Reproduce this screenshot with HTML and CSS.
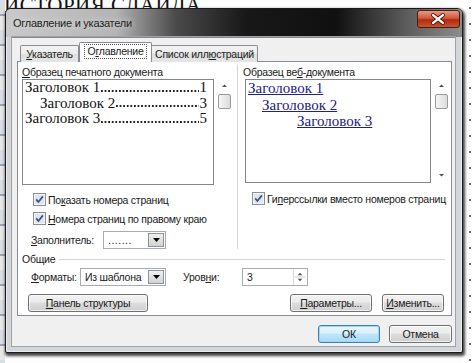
FILE: index.html
```html
<!DOCTYPE html>
<html lang="ru">
<head>
<meta charset="utf-8">
<link rel="stylesheet" href="styles.css">
</head>
<body>
<div class="desk">
  <div class="doc">
    <div class="doc-strip"></div>
    <div class="doc-title">ИСТОРИЯ СЛАЙДА</div>
    <div class="doc-ruler"></div>
  </div>
  <div class="window">
    <div class="titlebar">
      <span class="title">Оглавление и указатели</span>
      <span class="close">
        <svg width="43" height="18" viewBox="0 0 43 18">
          <path d="M16.5 5 L26.5 13 M26.5 5 L16.5 13" stroke="#5a1408" stroke-width="4.2" stroke-linecap="round"/>
          <path d="M16.5 5 L26.5 13 M26.5 5 L16.5 13" stroke="#ffffff" stroke-width="2.4" stroke-linecap="round"/>
        </svg>
      </span>
    </div>
    <div class="client">
      <div class="tabs">
        <div class="tab t1"><span><u>У</u>казатель</span></div>
        <div class="tab t2 active"><span class="focus">О<u>г</u>лавление</span></div>
        <div class="tab t3"><span>Список илл<u>ю</u>страций</span></div>
      </div>
      <div class="panel">
        <div class="cols">
          <div class="col col-left">
            <div class="label"><u>О</u>бразец печатного документа</div>
            <div class="preview">
              <div class="pbox print">
                <div class="tline"><span>Заголовок 1</span><span class="lead"></span><span>1</span></div>
                <div class="tline lvl2"><span>Заголовок 2</span><span class="lead"></span><span>3</span></div>
                <div class="tline"><span>Заголовок 3</span><span class="lead"></span><span>5</span></div>
              </div>
              <div class="scroll">
                <svg class="arr" width="15" height="10" viewBox="0 0 15 10"><path d="M5 6 L7.5 3.5 L10 6 Z" fill="#4d4d4d"/></svg>
                <div class="thumb"></div>
              </div>
            </div>
            <div class="chk-row">
              <span class="cb"><svg width="13" height="13" viewBox="0 0 13 13"><rect x="0.5" y="0.5" width="12" height="12" fill="#f4f4f4" stroke="#8e8f8f"/><rect x="2" y="2" width="9" height="9" fill="#dfe5ee"/><path d="M3.2 6.4 L5.4 9 L9.9 3.4" fill="none" stroke="#3b4f86" stroke-width="1.7"/></svg></span>
              <span>По<u>к</u>азать номера страниц</span>
            </div>
            <div class="chk-row">
              <span class="cb"><svg width="13" height="13" viewBox="0 0 13 13"><rect x="0.5" y="0.5" width="12" height="12" fill="#f4f4f4" stroke="#8e8f8f"/><rect x="2" y="2" width="9" height="9" fill="#dfe5ee"/><path d="M3.2 6.4 L5.4 9 L9.9 3.4" fill="none" stroke="#3b4f86" stroke-width="1.7"/></svg></span>
              <span><u>Н</u>омера страниц по правому краю</span>
            </div>
            <div class="field-row fill-row">
              <span class="flabel"><u>З</u>аполнитель:</span>
              <div class="combo combo-fill">
                <span class="cval">.......</span>
                <span class="cbtn"><svg width="7" height="4" viewBox="0 0 7 4"><path d="M0 0 H7 L3.5 4 Z" fill="#000"/></svg></span>
              </div>
            </div>
          </div>
          <div class="col col-right">
            <div class="label">Образец ве<u>б</u>-документа</div>
            <div class="preview">
              <div class="pbox web">
                <div class="wline"><a>Заголовок 1</a></div>
                <div class="wline w2"><a>Заголовок 2</a></div>
                <div class="wline w3"><a>Заголовок 3</a></div>
              </div>
              <div class="scroll">
                <svg class="arr" width="15" height="10" viewBox="0 0 15 10"><path d="M5 6 L7.5 3.5 L10 6 Z" fill="#4d4d4d"/></svg>
                <div class="thumb"></div>
                <svg class="arr down" width="15" height="10" viewBox="0 0 15 10"><path d="M5 4 L7.5 6.5 L10 4 Z" fill="#4d4d4d"/></svg>
              </div>
            </div>
            <div class="chk-row chk-right">
              <span class="cb"><svg width="13" height="13" viewBox="0 0 13 13"><rect x="0.5" y="0.5" width="12" height="12" fill="#f4f4f4" stroke="#8e8f8f"/><rect x="2" y="2" width="9" height="9" fill="#dfe5ee"/><path d="M3.2 6.4 L5.4 9 L9.9 3.4" fill="none" stroke="#3b4f86" stroke-width="1.7"/></svg></span>
              <span>Ги<u>п</u>ерссылки вместо номеров страниц</span>
            </div>
          </div>
        </div>
        <div class="group">
          <span>Общие</span><span class="gline"></span>
        </div>
        <div class="field-row fmt-row">
          <span class="flabel fmt-label"><u>Ф</u>орматы:</span>
          <div class="combo combo-fmt">
            <span class="cval">Из шаблона</span>
            <span class="cbtn"><svg width="7" height="4" viewBox="0 0 7 4"><path d="M0 0 H7 L3.5 4 Z" fill="#000"/></svg></span>
          </div>
          <span class="flabel lvl-label">Уров<u>н</u>и:</span>
          <div class="spin">
            <span class="cval">3</span>
            <span class="sbtn">
              <svg width="13" height="16" viewBox="0 0 13 16"><path d="M4 6 L6.5 3.5 L9 6 Z" fill="#555"/><path d="M4 10 L6.5 12.5 L9 10 Z" fill="#555"/><path d="M1 8 H12" stroke="#c9c9c9"/></svg>
            </span>
          </div>
        </div>
        <div class="btn-row">
          <button class="btn b-struct"><u>П</u>анель структуры</button>
          <span class="spacer"></span>
          <button class="btn b-params"><u>П</u>араметры...</button>
          <button class="btn b-edit"><u>И</u>зменить...</button>
        </div>
      </div>
      <div class="dlg-buttons">
        <button class="btn b-ok">ОК</button>
        <button class="btn b-cancel">Отмена</button>
      </div>
    </div>
  </div>
</div>
</body>
</html>
```

FILE: styles.css
```css
* { box-sizing: border-box; }
html, body { margin: 0; padding: 0; }
body {
  width: 474px;
  height: 363px;
  overflow: hidden;
  background: #ffffff;
  font-family: "Liberation Sans", Arial, sans-serif;
  font-size: 10.5px;
  letter-spacing: -0.25px;
  color: #1a1a1a;
}
.desk {
  position: relative;
  display: flow-root;
  width: 474px;
  height: 363px;
  background: #fdfdfd;
}
.doc { position: relative; height: 363px; display: flow-root; overflow: hidden; }
.doc-strip {
  position: absolute;
  left: 0; top: 0;
  width: 5px; height: 363px;
  background: repeating-linear-gradient(180deg, #d9dde4 0 14px, #9aa4b4 14px 16px, #e8e8e8 16px 30px);
}
.doc-title {
  padding-left: 4px;
  margin-top: -7px;
  font-family: "Liberation Serif", serif;
  font-size: 21px;
  letter-spacing: 0.5px;
  color: #111;
}
.doc-ruler {
  position: absolute;
  right: 0; top: 0;
  width: 11px; height: 363px;
  background: radial-gradient(circle at 7px 50%, #666 0 1px, transparent 1.5px) 0 0 / 11px 16px repeat-y, #fff;
}

.window {
  position: absolute;
  left: 5px;
  top: 8px;
  width: 458px;
  height: 345px;
  border: 1px solid #1a1a1a;
  border-radius: 6px 6px 2px 2px;
  background: #d3d6d9;
  box-shadow: 1px 2px 3px 1px rgba(0,0,0,.75), inset 0 0 0 1px #e9ebed;
  display: flex;
  flex-direction: column;
}
.titlebar {
  height: 28px;
  display: flex;
  align-items: flex-start;
  padding-left: 7px;
  border-radius: 5px 5px 0 0;
  background: linear-gradient(90deg, #c9c9c9 0, #b4b4b4 110px, #4a4a4a 170px, #181818 240px, #101010 330px, #5c5c5c 400px, #8c8c8c 456px);
}
.title {
  margin-top: 8px;
  font-size: 11px;
  color: #222;
  text-shadow: 0 0 6px #e8e8e8;
}
.close {
  margin-left: auto;
  margin-right: 2px;
  margin-top: 1px;
  width: 43px;
  height: 18px;
  border: 1px solid #4d1a12;
  border-radius: 3px;
  background: linear-gradient(180deg, #e29c87 0, #d0583c 45%, #b22a10 55%, #c8542f 100%);
  display: flex;
}
.close svg { display: block; margin: -1px 0 0 -1px; }

.client {
  margin: 0 7px 0 6px;
  height: 309px;
  background: #f0f0f0;
  border-top: 1px solid #888;
  box-shadow: 0 0 0 1px #9da3a8;
  display: flex;
  flex-direction: column;
}

.tabs {
  height: 24px;
  padding-top: 4px;
  padding-left: 8px;
  display: flex;
  align-items: flex-end;
  margin-bottom: -1px;
  position: relative;
  z-index: 2;
}
.tab {
  height: 17px;
  border: 1px solid #898c95;
  border-bottom: none;
  border-radius: 2px 2px 0 0;
  background: linear-gradient(180deg, #f3f3f3 0, #ebebeb 50%, #dedede 51%, #e6e6e6 100%);
  display: flex;
  align-items: center;
  justify-content: center;
  white-space: nowrap;
  color: #222;
}
.t1 { width: 59px; }
.t2 { width: 73px; }
.t3 { width: 107px; margin-left: -1px; }
.tab.active {
  height: 20px;
  background: #ffffff;
  position: relative;
  z-index: 3;
  align-items: flex-start;
  padding-top: 2px;
}
.focus { outline: 1px dotted #555; outline-offset: 0; padding: 0 2px; line-height: 13px; }

.panel {
  margin-left: 5px;
  width: 435px;
  height: 255px;
  background: #ffffff;
  border: 1px solid #898c95;
  padding: 3px 4px 0 4px;
  position: relative;
  z-index: 1;
  display: flex;
  flex-direction: column;
}
.cols {
  display: flex;
  height: 184px;
}
.col-left { width: 210px; margin-right: 5px; }
.col-right {
  flex: 1;
  border-left: 1px solid #d5d5d5;
  padding-left: 5px;
}
.label { height: 14px; line-height: 14px; white-space: nowrap; }
.preview { display: flex; height: 106px; }
.pbox {
  border: 1px solid #828790;
  background: #fff;
  overflow: hidden;
  font-family: "Liberation Serif", serif;
  font-size: 15px;
  letter-spacing: 0;
  line-height: 15.6px;
  color: #111;
}
.print { width: 192px; padding: 0 6px 0 2px; }
.tline { display: flex; white-space: nowrap; }
.tline .lead {
  flex: 1;
  margin: 0 1px;
  background: radial-gradient(circle at 1px 1px, #222 0 0.8px, transparent 1px) 0 100% / 3.6px 3px repeat-x;
  height: 11px;
  align-self: flex-end;
  margin-bottom: 3px;
}
.lvl2 { padding-left: 15px; }
.scroll {
  width: 15px;
  margin-left: 3px;
  display: flex;
  flex-direction: column;
  align-items: center;
  padding-top: 2px;
}
.arr { display: block; }
.thumb {
  width: 13px;
  height: 15px;
  margin-top: 3px;
  border: 1px solid #9a9a9a;
  border-radius: 2px;
  background: linear-gradient(90deg, #f6f6f6, #dcdcdc);
}
.arr.down { margin-top: auto; margin-bottom: 3px; }
.col-right .preview { margin-left: 2px; height: 104px; }
.web { width: 186px; padding: 0 2px; font-size: 15px; line-height: 16.5px; }
.web a { color: #22208a; text-decoration: underline; }
.wline { white-space: nowrap; }
.w2 { padding-left: 14px; }
.w3 { padding-left: 49px; }

.chk-row {
  height: 19px;
  display: flex;
  align-items: center;
  padding-left: 11px;
  white-space: nowrap;
}
.preview + .chk-row { margin-top: 5px; }
.chk-right { padding-left: 9px; margin-top: 6px !important; }
.cb { width: 13px; height: 13px; margin-right: 2px; display: flex; }
.cb svg { display: block; }

.field-row {
  display: flex;
  align-items: center;
  height: 18px;
  white-space: nowrap;
}
.fill-row { margin-top: 3px; padding-left: 9px; }
.flabel { color: #222; }
.fill-row .flabel { width: 72px; }
.combo, .spin {
  height: 18px;
  border: 1px solid #a5acb5;
  background: #fff;
  display: flex;
  align-items: center;
  padding: 1px;
}
.cval { flex: 1; padding-left: 3px; }
.cbtn {
  width: 16px;
  height: 14px;
  border: 1px solid #8f949a;
  background: linear-gradient(180deg, #f0f0f0, #d2d2d2);
  display: flex;
  align-items: center;
  justify-content: center;
}
.combo-fill { width: 63px; }
.combo-fill .cval { letter-spacing: 0.5px; }

.group {
  height: 14px;
  margin-top: 3px;
  display: flex;
  align-items: center;
  white-space: nowrap;
}
.gline {
  flex: 1;
  height: 1px;
  margin-left: 4px;
  margin-right: 2px;
  background: #d5d5d5;
}
.fmt-row { margin-top: 2px; padding-left: 9px; }
.fmt-label { width: 49px; }
.combo-fmt { width: 86px; }
.lvl-label { margin-left: 17px; width: 59px; }
.spin { width: 66px; }
.sbtn { width: 13px; height: 16px; display: flex; border-left: 1px solid #d8d8d8; }
.sbtn svg { display: block; }

.btn-row {
  display: flex;
  margin-top: 8px;
  padding-left: 6px;
  padding-right: 3px;
}
.spacer { flex: 1; }
.btn {
  height: 18px;
  border: 1px solid #707070;
  border-radius: 3px;
  background: linear-gradient(180deg, #f2f2f2 0, #ebebeb 45%, #dddddd 50%, #cfcfcf 100%);
  font-family: "Liberation Sans", Arial, sans-serif;
  font-size: 10.5px;
  letter-spacing: -0.25px;
  color: #1a1a1a;
  padding: 0;
  display: flex;
  align-items: center;
  justify-content: center;
  box-shadow: inset 0 0 0 1px rgba(255,255,255,.7);
}
.b-struct { width: 120px; }
.b-params { width: 82px; }
.b-edit { width: 62px; margin-left: 10px; }

.dlg-buttons {
  display: flex;
  justify-content: flex-end;
  padding-top: 9px;
  padding-right: 3px;
}
.b-ok {
  width: 62px;
  border-color: #3c7fb1;
  background: linear-gradient(180deg, #eaf6fd 0, #d9f0fc 45%, #bee6fd 50%, #a7d9f5 100%);
  box-shadow: inset 0 0 0 1px #9cd9f5;
}
.b-cancel { width: 63px; margin-left: 9px; }
```
